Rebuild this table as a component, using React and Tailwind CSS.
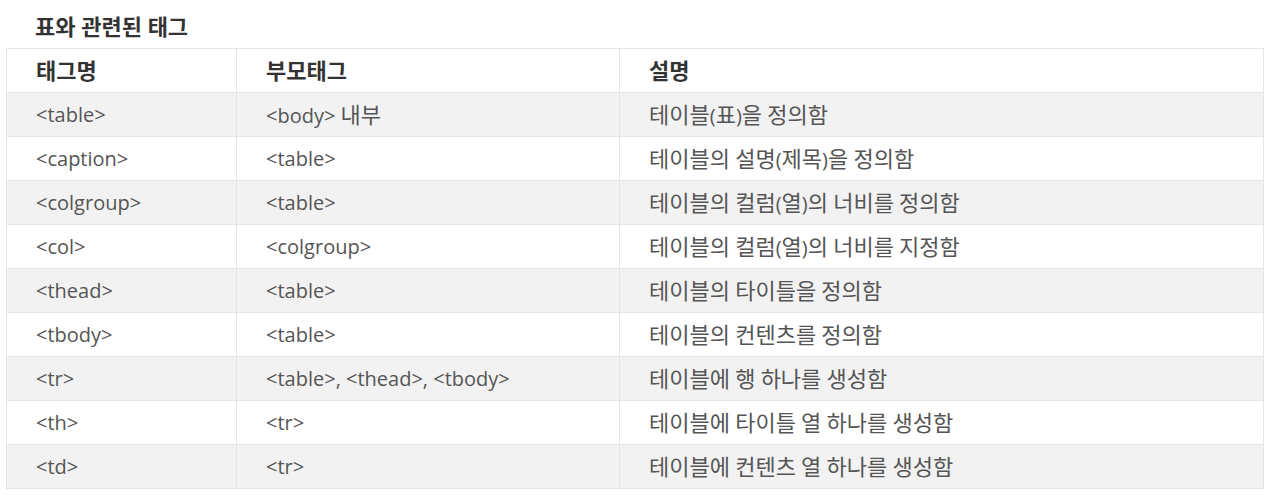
import React from 'react';

const rows = [
    ['<table>', '<body> 내부', '테이블(표)을 정의함'],
    ['<caption>', '<table>', '테이블의 설명(제목)을 정의함'],
    ['<colgroup>', '<table>', '테이블의 컬럼(열)의 너비를 정의함'],
    ['<col>', '<colgroup>', '테이블의 컬럼(열)의 너비를 지정함'],
    ['<thead>', '<table>', '테이블의 타이틀을 정의함'],
    ['<tbody>', '<table>', '테이블의 컨텐츠를 정의함'],
    ['<tr>', '<table>, <thead>, <tbody>', '테이블에 행 하나를 생성함'],
    ['<th>', '<tr>', '테이블에 타이틀 열 하나를 생성함'],
    ['<td>', '<tr>', '테이블에 컨텐츠 열 하나를 생성함'],
];

// hangul runs get a slightly larger size so their width matches the original font
const Mixed = ({ text }) => {
    const parts = text.split(/([\uac00-\ud7a3]+)/);
    return parts.map((p, i) =>
        /[\uac00-\ud7a3]/.test(p) ? (
            <span key={i} className="text-[22px]">{p}</span>
        ) : (
            <span key={i}>{p}</span>
        )
    );
};

const App = () => {
    return (
        <div className="min-h-screen bg-white pt-[14px] pl-[6px] pr-[10px] font-['Open_Sans','Noto_Sans_CJK_KR',sans-serif] text-[#555]">
            {/* TITLE */}
            <h3 className="pl-[29px] text-[22px] font-bold leading-[24px] text-[#333]">
                표와 관련된 태그
            </h3>

            {/* TABLE */}
            <table className="mt-[10px] w-[1258px] border-collapse text-[20px] leading-[24px]">
                <colgroup>
                    <col className="w-[230px]" />
                    <col className="w-[383px]" />
                    <col />
                </colgroup>
                <thead>
                    <tr className="h-[44px] bg-white">
                        <th className="border border-[#e6e6e6] pl-[29px] text-left font-bold text-[#333]"><Mixed text="태그명" /></th>
                        <th className="border border-[#e6e6e6] pl-[29px] text-left font-bold text-[#333]"><Mixed text="부모태그" /></th>
                        <th className="border border-[#e6e6e6] pl-[29px] text-left font-bold text-[#333]"><Mixed text="설명" /></th>
                    </tr>
                </thead>
                <tbody>
                    {rows.map((r, i) => (
                        <tr key={i} className={`h-[44px] ${i % 2 === 0 ? 'bg-[#f2f2f2]' : 'bg-white'}`}>
                            {r.map((c, j) => (
                                <td key={j} className="border border-[#e6e6e6] pl-[29px]">
                                    <Mixed text={c} />
                                </td>
                            ))}
                        </tr>
                    ))}
                </tbody>
            </table>
        </div>
    );
};

export default App;
